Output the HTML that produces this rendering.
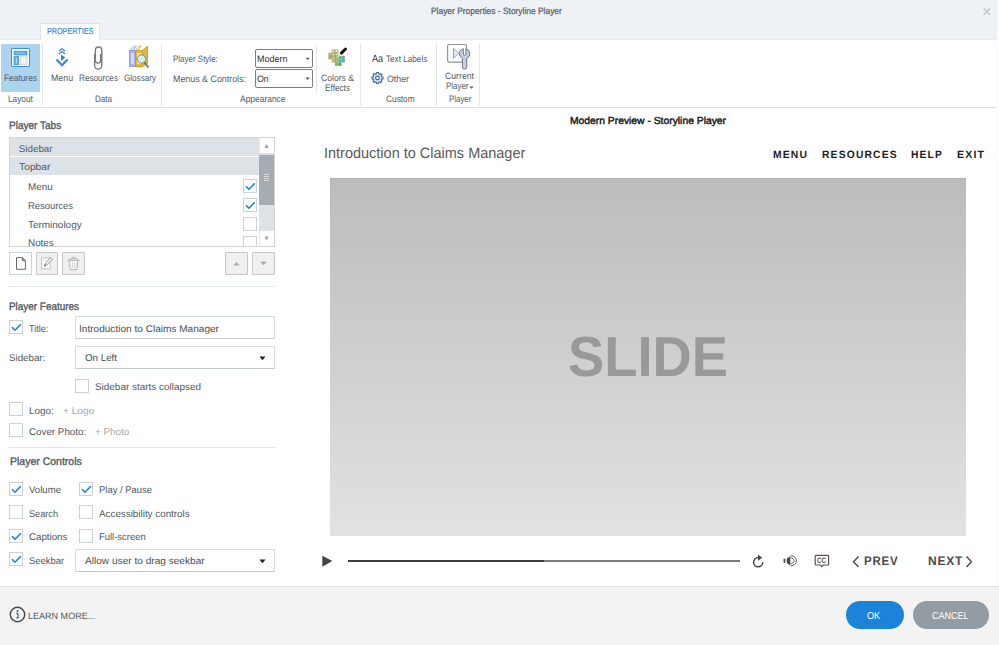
<!DOCTYPE html>
<html><head><meta charset="utf-8"><style>
html,body{margin:0;padding:0;}
body{width:999px;height:645px;position:relative;overflow:hidden;background:#fff;font-family:"Liberation Sans",sans-serif;text-rendering:geometricPrecision;}
.t{position:absolute;white-space:nowrap;line-height:1;}
.b{position:absolute;}
</style></head><body>
<div class="b" style="left:0px;top:0px;width:997px;height:40px;background:#eef2f6"></div>
<div class="b" style="left:0px;top:39px;width:997px;height:1px;background:#e7ebee"></div>
<div class="b" style="left:997px;top:0px;width:2px;height:586px;background:#fdfdfd"></div>
<div class="t" style="left:431.00px;top:6.81px;font-size:9.2px;color:#5a6168;transform:scaleX(0.9150);transform-origin:0 0;-webkit-text-stroke:0.25px #5a6168;">Player Properties - Storyline Player</div>
<svg class="b" style="left:981px;top:6px" width="12" height="12" viewBox="0 0 12 12"><path d="M2.6 2.4L9.2 8.8M9.2 2.4L2.6 8.8" stroke="#c4c6c8" stroke-width="1.6"/></svg>
<div class="b" style="left:40px;top:23px;width:60px;height:17px;background:#fff;border:1px solid #dfe4e8;border-bottom:none;box-sizing:border-box"></div>
<div class="t" style="left:46.80px;top:26.75px;font-size:8.8px;color:#2f86d8;transform:scaleX(0.8186);transform-origin:0 0;-webkit-text-stroke:0.15px #2f86d8;">PROPERTIES</div>
<div class="b" style="left:0px;top:40px;width:997px;height:67px;background:#fff"></div>
<div class="b" style="left:0px;top:107px;width:997px;height:1px;background:#dde3e8"></div>
<div class="b" style="left:1px;top:44px;width:39px;height:48px;background:#add4ef"></div>
<div class="b" style="left:42px;top:43px;width:1px;height:63px;background:#e3e8ec"></div>
<div class="b" style="left:161px;top:43px;width:1px;height:63px;background:#e3e8ec"></div>
<div class="b" style="left:360px;top:43px;width:1px;height:63px;background:#e3e8ec"></div>
<div class="b" style="left:436px;top:43px;width:1px;height:63px;background:#e3e8ec"></div>
<div class="b" style="left:479px;top:43px;width:1px;height:63px;background:#e3e8ec"></div>
<div class="b" style="left:316px;top:45px;width:1px;height:47px;background:#e2e3e5"></div>
<div class="t" style="left:3.80px;top:73.93px;font-size:9.3px;color:#525c66;transform:scaleX(0.8989);transform-origin:0 0;">Features</div>
<div class="t" style="left:8.00px;top:95.13px;font-size:9.3px;color:#525c66;transform:scaleX(0.8881);transform-origin:0 0;">Layout</div>
<div class="t" style="left:51.20px;top:73.93px;font-size:9.3px;color:#525c66;transform:scaleX(0.9496);transform-origin:0 0;">Menu</div>
<div class="t" style="left:79.00px;top:73.93px;font-size:9.3px;color:#525c66;transform:scaleX(0.8773);transform-origin:0 0;">Resources</div>
<div class="t" style="left:124.00px;top:73.93px;font-size:9.3px;color:#525c66;transform:scaleX(0.8722);transform-origin:0 0;">Glossary</div>
<div class="t" style="left:95.30px;top:94.93px;font-size:9.3px;color:#525c66;transform:scaleX(0.8653);transform-origin:0 0;">Data</div>
<div class="t" style="left:173.00px;top:55.23px;font-size:9.3px;color:#525c66;transform:scaleX(0.8583);transform-origin:0 0;">Player Style:</div>
<div class="t" style="left:173.00px;top:74.93px;font-size:9.3px;color:#525c66;transform:scaleX(0.9543);transform-origin:0 0;">Menus &amp; Controls:</div>
<div class="b" style="left:255px;top:49px;width:58px;height:19px;background:#fff;border:1.2px solid #7d7d7d;box-sizing:border-box;border-radius:2px"></div>
<div class="b" style="left:255px;top:69px;width:58px;height:19px;background:#fff;border:1.2px solid #7d7d7d;box-sizing:border-box;border-radius:2px"></div>
<div class="t" style="left:257.30px;top:55.23px;font-size:9.3px;color:#333;transform:scaleX(0.9674);transform-origin:0 0;">Modern</div>
<div class="t" style="left:257.30px;top:74.93px;font-size:9.3px;color:#333;transform:scaleX(0.9424);transform-origin:0 0;">On</div>
<svg class="b" style="left:305px;top:57px" width="6" height="4" viewBox="0 0 6 4"><path d="M0.6 0.8h4l-2 2.3z" fill="#505050"/></svg>
<svg class="b" style="left:305px;top:77px" width="6" height="4" viewBox="0 0 6 4"><path d="M0.6 0.6h4l-2 2.3z" fill="#505050"/></svg>
<div class="t" style="left:321.40px;top:73.93px;font-size:9.3px;color:#525c66;transform:scaleX(0.9253);transform-origin:0 0;">Colors &amp;</div>
<div class="t" style="left:325.00px;top:83.73px;font-size:9.3px;color:#525c66;transform:scaleX(0.8850);transform-origin:0 0;">Effects</div>
<div class="t" style="left:240.00px;top:94.93px;font-size:9.3px;color:#525c66;transform:scaleX(0.9073);transform-origin:0 0;">Appearance</div>
<div class="t" style="left:371.80px;top:53.91px;font-size:10.5px;color:#3a3a3a;transform:scaleX(0.8707);transform-origin:0 0;">Aa</div>
<div class="t" style="left:386.30px;top:55.33px;font-size:9.3px;color:#525c66;transform:scaleX(0.8776);transform-origin:0 0;">Text Labels</div>
<div class="t" style="left:386.70px;top:74.83px;font-size:9.3px;color:#525c66;transform:scaleX(0.9462);transform-origin:0 0;">Other</div>
<div class="t" style="left:385.80px;top:95.13px;font-size:9.3px;color:#525c66;transform:scaleX(0.8958);transform-origin:0 0;">Custom</div>
<div class="t" style="left:444.70px;top:71.93px;font-size:9.3px;color:#525c66;transform:scaleX(0.9350);transform-origin:0 0;">Current</div>
<div class="t" style="left:445.70px;top:82.33px;font-size:9.3px;color:#525c66;transform:scaleX(0.8534);transform-origin:0 0;">Player</div>
<svg class="b" style="left:469px;top:86px" width="5" height="4" viewBox="0 0 5 4"><path d="M0.5 0.6h4l-2 2.2z" fill="#555"/></svg>
<div class="t" style="left:448.60px;top:95.13px;font-size:9.3px;color:#525c66;transform:scaleX(0.8496);transform-origin:0 0;">Player</div>
<svg class="b" style="left:10px;top:47px" width="22" height="21" viewBox="0 0 22 21">
<rect x="1.5" y="1.5" width="18" height="18" rx="1.5" fill="#fff" stroke="#3b92d4" stroke-width="1.1"/>
<rect x="4" y="4.2" width="13" height="3.8" fill="#5aaae8" stroke="#3b8fd2" stroke-width="0.7"/>
<path d="M6 6.1h9" stroke="#a8d4f6" stroke-width="0.9"/>
<rect x="4" y="9.4" width="4.8" height="8.4" fill="#62afea" stroke="#3b8fd2" stroke-width="0.7"/>
<path d="M6.4 10.8v5.6" stroke="#c4e2fa" stroke-width="0.9"/>
<rect x="10.2" y="9.4" width="6.8" height="8.4" fill="#ececec" stroke="#cfcfcf" stroke-width="0.7"/>
<path d="M12.4 10.8v5.6M14.8 10.8v5.6" stroke="#fafafa" stroke-width="0.8"/>
</svg>
<svg class="b" style="left:54px;top:46px" width="16" height="22" viewBox="0 0 16 22">
<path d="M5 5.2L8 2.6L11 5.2M5 8L8 5.4L11 8" fill="none" stroke="#4a8fd6" stroke-width="1.3"/>
<path d="M7 8.5L11.3 11.5L7 15z" fill="#3f7fc8"/>
<path d="M2.5 13.5L8 19.2L13.5 13.5" fill="none" stroke="#3a86d3" stroke-width="2.2"/>
</svg>
<svg class="b" style="left:92px;top:45px" width="13" height="26" viewBox="0 0 13 26">
<path d="M2.6 9V20.5A3.6 3.6 0 0 0 9.8 20.5V5.2A3.2 3.2 0 0 0 3.4 5.2V15.5A2.6 2.6 0 0 0 8.6 15.5V9" fill="none" stroke="#7b7b7b" stroke-width="1.4"/>
</svg>
<svg class="b" style="left:127px;top:44px" width="24" height="26" viewBox="0 0 24 26">
<path d="M2.5 6.5L6.5 2H9.5L6.5 6.5z" fill="#d8dcf4" stroke="#9aa0e0" stroke-width="0.6"/>
<rect x="2.5" y="6.5" width="6" height="16" fill="#a9b0f0" stroke="#8088d8" stroke-width="0.7"/>
<rect x="4" y="9" width="3" height="11" fill="#d4d8fa"/>
<path d="M8.5 6.5L12 2H14.5L11 6.5z" fill="#f4e8b8" stroke="#c8a838" stroke-width="0.6"/>
<path d="M8.5 6.5H15L20.5 2.2V19.5L15 23H8.5z" fill="#e0b838" stroke="#b89020" stroke-width="0.7"/>
<rect x="10" y="9" width="4" height="11" fill="#f4e4a0"/>
<line x1="17" y1="18" x2="21.5" y2="23.5" stroke="#6a6a6a" stroke-width="1.8"/>
<circle cx="14.5" cy="15" r="4.2" fill="#d8eef4" stroke="#7a8a90" stroke-width="1"/>
</svg>
<svg class="b" style="left:328px;top:49px" width="18" height="17" viewBox="0 0 18 17"><rect x="3.75" y="0.50" width="3.3" height="3.3" fill="#8a9aaa"/><circle cx="5.40" cy="2.15" r="1.2" fill="#f8e070"/><rect x="7.00" y="0.50" width="3.3" height="3.3" fill="#8a9aaa"/><circle cx="8.65" cy="2.15" r="1.2" fill="#f2f08a"/><rect x="0.50" y="3.75" width="3.3" height="3.3" fill="#8a9aaa"/><circle cx="2.15" cy="5.40" r="1.2" fill="#f6b030"/><rect x="3.75" y="3.75" width="3.3" height="3.3" fill="#8a9aaa"/><circle cx="5.40" cy="5.40" r="1.2" fill="#f4e64c"/><rect x="7.00" y="3.75" width="3.3" height="3.3" fill="#8a9aaa"/><circle cx="8.65" cy="5.40" r="1.2" fill="#d8f060"/><rect x="0.50" y="7.00" width="3.3" height="3.3" fill="#8a9aaa"/><circle cx="2.15" cy="8.65" r="1.2" fill="#f0a020"/><rect x="3.75" y="7.00" width="3.3" height="3.3" fill="#8a9aaa"/><circle cx="5.40" cy="8.65" r="1.2" fill="#f0e020"/><rect x="7.00" y="7.00" width="3.3" height="3.3" fill="#8a9aaa"/><circle cx="8.65" cy="8.65" r="1.2" fill="#a8e040"/><rect x="10.25" y="7.00" width="3.3" height="3.3" fill="#8a9aaa"/><circle cx="11.90" cy="8.65" r="1.2" fill="#40d860"/><rect x="13.50" y="7.00" width="3.3" height="3.3" fill="#8a9aaa"/><circle cx="15.15" cy="8.65" r="1.2" fill="#40c8a8"/><rect x="3.75" y="10.25" width="3.3" height="3.3" fill="#8a9aaa"/><circle cx="5.40" cy="11.90" r="1.2" fill="#f0d820"/><rect x="7.00" y="10.25" width="3.3" height="3.3" fill="#8a9aaa"/><circle cx="8.65" cy="11.90" r="1.2" fill="#a0d838"/><rect x="10.25" y="10.25" width="3.3" height="3.3" fill="#8a9aaa"/><circle cx="11.90" cy="11.90" r="1.2" fill="#38c858"/><rect x="13.50" y="10.25" width="3.3" height="3.3" fill="#8a9aaa"/><circle cx="15.15" cy="11.90" r="1.2" fill="#30c0b0"/><rect x="7.00" y="13.50" width="3.3" height="3.3" fill="#8a9aaa"/><circle cx="8.65" cy="15.15" r="1.2" fill="#88c830"/><rect x="10.25" y="13.50" width="3.3" height="3.3" fill="#8a9aaa"/><circle cx="11.90" cy="15.15" r="1.2" fill="#30b850"/></svg>
<svg class="b" style="left:336px;top:47px" width="11" height="12" viewBox="0 0 11 12"><path d="M1.5 10L6 5.5" stroke="#e8e0c0" stroke-width="1.6"/><path d="M5.5 6L9.5 2" stroke="#111" stroke-width="3" stroke-linecap="round"/></svg>
<svg class="b" style="left:370px;top:71px" width="15" height="15" viewBox="0 0 15 15"><path d="M11.64 5.85L13.02 6.04L13.02 7.96L11.64 8.15L11.24 9.12L12.08 10.22L10.72 11.58L9.62 10.74L8.65 11.14L8.46 12.52L6.54 12.52L6.35 11.14L5.38 10.74L4.28 11.58L2.92 10.22L3.76 9.12L3.36 8.15L1.98 7.96L1.98 6.04L3.36 5.85L3.76 4.88L2.92 3.78L4.28 2.42L5.38 3.26L6.35 2.86L6.54 1.48L8.46 1.48L8.65 2.86L9.62 3.26L10.72 2.42L12.08 3.78L11.24 4.88z" fill="#dfe8f2" stroke="#3a6598" stroke-width="1.1" stroke-linejoin="round"/><circle cx="7.5" cy="7" r="1.9" fill="#fff" stroke="#3a6598" stroke-width="1.1"/></svg>
<svg class="b" style="left:446px;top:43px" width="26" height="27" viewBox="0 0 26 27">
<rect x="1.6" y="1.5" width="18.8" height="17.6" rx="1.5" fill="#fff" stroke="#8c969c" stroke-width="1.2"/>
<path d="M7.5 5.3L12.8 10.3L7.5 15.3z" fill="#dceafa" stroke="#7aa0d0" stroke-width="0.9"/>
<path d="M17.3 5.67V11A1.3 1.3 0 0 0 19.9 11V5.67A5.2 5.2 0 0 1 20.8 15.41V24A2.2 2.2 0 0 1 16.4 24V15.41A5.2 5.2 0 0 1 17.3 5.67z" fill="#c9cde2" stroke="#6e7a84" stroke-width="1"/>
</svg>
<div class="t" style="left:9.30px;top:121.49px;font-size:11px;color:#4f5963;transform:scaleX(0.9113);transform-origin:0 0;-webkit-text-stroke:0.35px #4f5963;">Player Tabs</div>
<div class="b" style="left:9px;top:137px;width:266px;height:110px;border:1px solid #d2d6da;box-sizing:border-box;background:#fff;border-bottom-width:1.5px"></div>
<div class="b" style="left:10px;top:138px;width:249px;height:18px;background:#dde2e6"></div>
<div class="b" style="left:10px;top:157px;width:249px;height:18px;background:#dde2e6"></div>
<div class="t" style="left:18.80px;top:144.60px;font-size:9.8px;color:#4f5963;">Sidebar</div>
<div class="t" style="left:18.80px;top:162.70px;font-size:9.8px;color:#4f5963;transform:scaleX(1.0513);transform-origin:0 0;">Topbar</div>
<div class="t" style="left:27.80px;top:183.10px;font-size:9.8px;color:#4f5963;transform:scaleX(1.0072);transform-origin:0 0;">Menu</div>
<div class="t" style="left:27.80px;top:202.10px;font-size:9.8px;color:#4f5963;transform:scaleX(0.9606);transform-origin:0 0;">Resources</div>
<div class="t" style="left:27.80px;top:220.80px;font-size:9.8px;color:#4f5963;transform:scaleX(1.0162);transform-origin:0 0;">Terminology</div>
<div class="b" style="left:10px;top:232px;width:249px;height:14px;overflow:hidden">
<div class="t" style="left:17.80px;top:7.40px;font-size:9.8px;color:#4f5963;transform:scaleX(1.0077);transform-origin:0 0;">Notes</div>
</div>
<div class="b" style="left:243px;top:179px;width:14px;height:14px;border:1px solid #cad1d7;box-sizing:border-box;background:#fff"></div>
<svg class="b" style="left:243px;top:179px" width="14" height="14" viewBox="0 0 14 14"><path d="M3 7.2L6 10.2L11.8 4.2" fill="none" stroke="#1a7fd6" stroke-width="1.6"/></svg>
<div class="b" style="left:243px;top:198px;width:14px;height:14px;border:1px solid #cad1d7;box-sizing:border-box;background:#fff"></div>
<svg class="b" style="left:243px;top:198px" width="14" height="14" viewBox="0 0 14 14"><path d="M3 7.2L6 10.2L11.8 4.2" fill="none" stroke="#1a7fd6" stroke-width="1.6"/></svg>
<div class="b" style="left:243px;top:217px;width:14px;height:14px;border:1px solid #cad1d7;box-sizing:border-box;background:#fff"></div>
<div class="b" style="left:243px;top:236px;width:14px;height:10px;border:1px solid #cad1d7;box-sizing:border-box;background:#fff;border-bottom:none"></div>
<div class="b" style="left:259px;top:138px;width:15px;height:108px;background:#fff;border-left:1px solid #e6e9ec;box-sizing:border-box"></div>
<div class="b" style="left:259px;top:153px;width:15px;height:78px;background:#dde2e6"></div>
<div class="b" style="left:259px;top:155px;width:15px;height:50px;background:#a3acb2"></div>
<svg class="b" style="left:259px;top:138px" width="15" height="15" viewBox="0 0 15 15"><path d="M5.5 10h4.2L7.6 6z" fill="#9aa3aa"/></svg>
<svg class="b" style="left:259px;top:231px" width="15" height="15" viewBox="0 0 15 15"><path d="M5.5 5.5h4.2L7.6 9.5z" fill="#9aa3aa"/></svg>
<svg class="b" style="left:259px;top:172px" width="15" height="12" viewBox="0 0 15 12"><path d="M5 2.5h5M5 4.5h5M5 6.5h5M5 8.5h5" stroke="#d4d9dd" stroke-width="1"/></svg>
<div class="b" style="left:9px;top:252px;width:23px;height:23px;border:1px solid #c9d5df;box-sizing:border-box;background:#fff"></div>
<svg class="b" style="left:9px;top:252px" width="23" height="23" viewBox="0 0 23 23"><path d="M7.5 5.6H13.2L16.4 8.8V17.3H7.5z" fill="#fff" stroke="#626c72" stroke-width="1"/><path d="M13.2 5.6V8.8H16.4z" fill="#8a9298" stroke="#626c72" stroke-width="0.7"/></svg>
<div class="b" style="left:36px;top:252px;width:22px;height:23px;border:1.3px solid #c6c6c6;box-sizing:border-box;background:#f0f0f0;border-radius:1px"></div>
<svg class="b" style="left:36px;top:252px" width="23" height="23" viewBox="0 0 23 23"><rect x="5.6" y="5.8" width="8.6" height="11" fill="#fbfbfb" stroke="#bdbdbd" stroke-width="0.9"/><path d="M7.4 8.2h2" stroke="#d0d0d0" stroke-width="0.8"/><path d="M14.6 5.2L16.6 7.2L10.4 13.4L8.2 14.2L9 12z" fill="#f4f4f4" stroke="#8f8f8f" stroke-width="0.9" stroke-linejoin="round"/><path d="M8.3 14.1L9 12.1L10.3 13.4z" fill="#666"/></svg>
<div class="b" style="left:62px;top:252px;width:23px;height:23px;border:1.3px solid #c6c6c6;box-sizing:border-box;background:#f0f0f0;border-radius:1px"></div>
<svg class="b" style="left:62px;top:252px" width="23" height="23" viewBox="0 0 23 23"><path d="M6 8.6Q6 6.6 11.5 6.4Q17 6.6 17 8.6z" fill="#e4e4e4" stroke="#b4b4b4" stroke-width="1"/><path d="M9.8 6.4Q9.8 5 11.5 5Q13.2 5 13.2 6.4" fill="none" stroke="#b4b4b4" stroke-width="0.9"/><path d="M7.2 9.2L8.3 17.2Q11.5 18.2 14.7 17.2L15.8 9.2" fill="#fafafa" stroke="#b4b4b4" stroke-width="1.1"/><path d="M10.4 10.4v5.6M12.6 10.4v5.6" stroke="#cdcdcd" stroke-width="0.9"/></svg>
<div class="b" style="left:225px;top:252px;width:23px;height:23px;border:1.3px solid #c6c6c6;box-sizing:border-box;background:#f0f0f0;border-radius:1px"></div>
<svg class="b" style="left:225px;top:252px" width="23" height="23" viewBox="0 0 23 23"><path d="M8.3 13.5h6.4L11.5 10z" fill="#a9a9a9"/></svg>
<div class="b" style="left:252px;top:252px;width:23px;height:23px;border:1.3px solid #c6c6c6;box-sizing:border-box;background:#f0f0f0;border-radius:1px"></div>
<svg class="b" style="left:252px;top:252px" width="23" height="23" viewBox="0 0 23 23"><path d="M8.3 9.8h6.4L11.5 13.3z" fill="#a9a9a9"/></svg>
<div class="b" style="left:9px;top:286px;width:266px;height:1px;background:#e2e7eb"></div>
<div class="t" style="left:9.30px;top:302.49px;font-size:11px;color:#4f5963;transform:scaleX(0.9014);transform-origin:0 0;-webkit-text-stroke:0.35px #4f5963;">Player Features</div>
<div class="b" style="left:9px;top:320px;width:14px;height:14px;border:1px solid #cad1d7;box-sizing:border-box;background:#fff"></div>
<svg class="b" style="left:9px;top:320px" width="14" height="14" viewBox="0 0 14 14"><path d="M3 7.2L6 10.2L11.8 4.2" fill="none" stroke="#1a7fd6" stroke-width="1.6"/></svg>
<div class="t" style="left:29.30px;top:324.90px;font-size:9.8px;color:#4f5963;transform:scaleX(0.9246);transform-origin:0 0;">Title:</div>
<div class="b" style="left:75px;top:316px;width:200px;height:23px;border:1px solid #d5dde3;border-bottom-color:#c4cdd5;box-sizing:border-box;background:#fff;border-radius:1px"></div>
<div class="t" style="left:79.20px;top:324.80px;font-size:9.8px;color:#4a4f55;transform:scaleX(1.0281);transform-origin:0 0;">Introduction to Claims Manager</div>
<div class="t" style="left:8.70px;top:353.90px;font-size:9.8px;color:#4f5963;transform:scaleX(0.9944);transform-origin:0 0;">Sidebar:</div>
<div class="b" style="left:75px;top:346px;width:200px;height:23px;border:1px solid #d5dde3;border-bottom-color:#c4cdd5;box-sizing:border-box;background:#fff;border-radius:1px"></div>
<div class="t" style="left:85.30px;top:353.90px;font-size:9.8px;color:#4a4f55;transform:scaleX(0.9955);transform-origin:0 0;">On Left</div>
<svg class="b" style="left:258px;top:355px" width="8" height="6" viewBox="0 0 8 6"><path d="M1.5 1.5h6L4.5 5.3z" fill="#222"/></svg>
<div class="b" style="left:75px;top:379px;width:14px;height:14px;border:1px solid #cad1d7;box-sizing:border-box;background:#fff"></div>
<div class="t" style="left:95.20px;top:383.20px;font-size:9.8px;color:#4f5963;transform:scaleX(1.0135);transform-origin:0 0;">Sidebar starts collapsed</div>
<div class="b" style="left:9px;top:402px;width:14px;height:14px;border:1px solid #cad1d7;box-sizing:border-box;background:#fff"></div>
<div class="t" style="left:29.00px;top:406.90px;font-size:9.8px;color:#4f5963;transform:scaleX(1.0072);transform-origin:0 0;">Logo:</div>
<div class="t" style="left:62.60px;top:406.90px;font-size:9.8px;color:#a7a9ab;transform:scaleX(1.0345);transform-origin:0 0;">+ Logo</div>
<div class="b" style="left:9px;top:423px;width:14px;height:14px;border:1px solid #cad1d7;box-sizing:border-box;background:#fff"></div>
<div class="t" style="left:29.00px;top:427.70px;font-size:9.8px;color:#4f5963;">Cover Photo:</div>
<div class="t" style="left:95.00px;top:427.70px;font-size:9.8px;color:#a7a9ab;transform:scaleX(1.0043);transform-origin:0 0;">+ Photo</div>
<div class="b" style="left:9px;top:447px;width:266px;height:1px;background:#e2e7eb"></div>
<div class="t" style="left:9.60px;top:457.09px;font-size:11px;color:#4f5963;transform:scaleX(0.9536);transform-origin:0 0;-webkit-text-stroke:0.35px #4f5963;">Player Controls</div>
<div class="b" style="left:9px;top:482px;width:14px;height:14px;border:1px solid #cad1d7;box-sizing:border-box;background:#fff"></div>
<svg class="b" style="left:9px;top:482px" width="14" height="14" viewBox="0 0 14 14"><path d="M3 7.2L6 10.2L11.8 4.2" fill="none" stroke="#1a7fd6" stroke-width="1.6"/></svg>
<div class="t" style="left:29.00px;top:486.10px;font-size:9.8px;color:#4f5963;transform:scaleX(0.9791);transform-origin:0 0;">Volume</div>
<div class="b" style="left:79px;top:482px;width:14px;height:14px;border:1px solid #cad1d7;box-sizing:border-box;background:#fff"></div>
<svg class="b" style="left:79px;top:482px" width="14" height="14" viewBox="0 0 14 14"><path d="M3 7.2L6 10.2L11.8 4.2" fill="none" stroke="#1a7fd6" stroke-width="1.6"/></svg>
<div class="t" style="left:98.50px;top:486.10px;font-size:9.8px;color:#4f5963;transform:scaleX(0.9632);transform-origin:0 0;">Play / Pause</div>
<div class="b" style="left:9px;top:505px;width:14px;height:14px;border:1px solid #cad1d7;box-sizing:border-box;background:#fff"></div>
<div class="t" style="left:29.00px;top:509.50px;font-size:9.8px;color:#4f5963;transform:scaleX(0.9342);transform-origin:0 0;">Search</div>
<div class="b" style="left:79px;top:505px;width:14px;height:14px;border:1px solid #cad1d7;box-sizing:border-box;background:#fff"></div>
<div class="t" style="left:98.50px;top:509.50px;font-size:9.8px;color:#4f5963;transform:scaleX(1.0033);transform-origin:0 0;">Accessibility controls</div>
<div class="b" style="left:9px;top:529px;width:14px;height:14px;border:1px solid #cad1d7;box-sizing:border-box;background:#fff"></div>
<svg class="b" style="left:9px;top:529px" width="14" height="14" viewBox="0 0 14 14"><path d="M3 7.2L6 10.2L11.8 4.2" fill="none" stroke="#1a7fd6" stroke-width="1.6"/></svg>
<div class="t" style="left:29.00px;top:533.10px;font-size:9.8px;color:#4f5963;transform:scaleX(0.9900);transform-origin:0 0;">Captions</div>
<div class="b" style="left:79px;top:529px;width:14px;height:14px;border:1px solid #cad1d7;box-sizing:border-box;background:#fff"></div>
<div class="t" style="left:98.50px;top:533.10px;font-size:9.8px;color:#4f5963;transform:scaleX(0.9637);transform-origin:0 0;">Full-screen</div>
<div class="b" style="left:9px;top:552px;width:14px;height:14px;border:1px solid #cad1d7;box-sizing:border-box;background:#fff"></div>
<svg class="b" style="left:9px;top:552px" width="14" height="14" viewBox="0 0 14 14"><path d="M3 7.2L6 10.2L11.8 4.2" fill="none" stroke="#1a7fd6" stroke-width="1.6"/></svg>
<div class="t" style="left:29.00px;top:556.60px;font-size:9.8px;color:#4f5963;transform:scaleX(0.9643);transform-origin:0 0;">Seekbar</div>
<div class="b" style="left:75px;top:549px;width:200px;height:23px;border:1px solid #d5dde3;border-bottom-color:#c4cdd5;box-sizing:border-box;background:#fff;border-radius:1px"></div>
<div class="t" style="left:85.00px;top:556.60px;font-size:9.8px;color:#4a4f55;transform:scaleX(1.0316);transform-origin:0 0;">Allow user to drag seekbar</div>
<svg class="b" style="left:258px;top:558px" width="8" height="6" viewBox="0 0 8 6"><path d="M1.5 1.5h6L4.5 5.3z" fill="#222"/></svg>
<div class="t" style="left:570.30px;top:117.17px;font-size:10.2px;color:#1a1a1a;transform:scaleX(1.0130);transform-origin:0 0;-webkit-text-stroke:0.45px #1a1a1a;">Modern Preview - Storyline Player</div>
<div class="t" style="left:324.40px;top:145.90px;font-size:15px;color:#5a5a5a;transform:scaleX(0.9658);transform-origin:0 0;">Introduction to Claims Manager</div>
<div class="t" style="left:773.00px;top:150.33px;font-size:10.6px;color:#222;font-weight:bold;letter-spacing:1.2px;transform:scaleX(0.9765);transform-origin:0 0;">MENU</div>
<div class="t" style="left:821.70px;top:150.33px;font-size:10.6px;color:#222;font-weight:bold;letter-spacing:1.2px;transform:scaleX(0.9733);transform-origin:0 0;">RESOURCES</div>
<div class="t" style="left:911.00px;top:150.33px;font-size:10.6px;color:#222;font-weight:bold;letter-spacing:1.2px;transform:scaleX(0.9663);transform-origin:0 0;">HELP</div>
<div class="t" style="left:956.70px;top:150.33px;font-size:10.6px;color:#222;font-weight:bold;letter-spacing:1.2px;transform:scaleX(0.9942);transform-origin:0 0;">EXIT</div>
<div class="b" style="left:330px;top:178px;width:636px;height:358px;background:linear-gradient(#bcbcbc,#e2e2e2)"></div>
<div class="b" style="left:330px;top:178px;width:636px;height:1px;background:#b3b3b3"></div>
<div class="t" style="left:567.60px;top:329.17px;font-size:56.5px;color:#999;font-weight:bold;transform:scaleX(0.9610);transform-origin:0 0;">SLIDE</div>
<svg class="b" style="left:320px;top:553px" width="16" height="16" viewBox="0 0 16 16"><path d="M2.3 2.8L12.4 8L2.3 13.8z" fill="#444"/></svg>
<div class="b" style="left:348px;top:560px;width:196px;height:2px;background:#3d3d3d"></div>
<div class="b" style="left:544px;top:560px;width:196px;height:2px;background:#7d7d7d"></div>
<svg class="b" style="left:750px;top:552px" width="16" height="17" viewBox="0 0 16 17"><path d="M12.8 10.2A4.6 4.6 0 1 1 8.2 5.6" fill="none" stroke="#444" stroke-width="1.5"/><path d="M8 2.6L12.2 5.7L8 8.8z" fill="#444"/></svg>
<svg class="b" style="left:781px;top:552px" width="18" height="16" viewBox="0 0 18 16"><rect x="2.6" y="6.8" width="1.7" height="4" fill="#444"/><path d="M5.8 6.6L9.3 4.2V13.4L5.8 11z" fill="#444"/><path d="M9.6 3.6Q15.4 4.6 15.4 8.8Q15.4 13 9.6 14" fill="none" stroke="#555" stroke-width="0.9"/><path d="M9.6 5.6Q13.2 6.4 13.2 8.8Q13.2 11.2 9.6 12" fill="none" stroke="#555" stroke-width="0.9"/></svg>
<svg class="b" style="left:812px;top:552px" width="20" height="17" viewBox="0 0 20 17"><path d="M4 3.4H15.8Q16.6 3.4 16.6 4.2V12.2Q16.6 13 15.8 13H11.2L9.9 14.6L8.6 13H4Q3.2 13 3.2 12.2V4.2Q3.2 3.4 4 3.4z" fill="#fff" stroke="#555" stroke-width="1.2"/></svg>
<div class="t" style="left:817.00px;top:556.70px;font-size:7.8px;color:#555;font-weight:bold;transform:scaleX(0.7985);transform-origin:0 0;">CC</div>
<svg class="b" style="left:850px;top:554px" width="12" height="15" viewBox="0 0 12 15"><path d="M8.5 2.5L3.5 7.8L8.5 13" fill="none" stroke="#4a4a4a" stroke-width="1.4"/></svg>
<div class="t" style="left:863.70px;top:554.50px;font-size:12.4px;color:#4a4a4a;font-weight:bold;letter-spacing:0.8px;transform:scaleX(0.9292);transform-origin:0 0;">PREV</div>
<div class="t" style="left:927.50px;top:554.50px;font-size:12.4px;color:#4a4a4a;font-weight:bold;letter-spacing:0.8px;transform:scaleX(0.9668);transform-origin:0 0;">NEXT</div>
<svg class="b" style="left:963px;top:554px" width="12" height="15" viewBox="0 0 12 15"><path d="M3.5 2.5L8.5 7.8L3.5 13" fill="none" stroke="#4a4a4a" stroke-width="1.4"/></svg>
<div class="b" style="left:0px;top:586px;width:999px;height:1px;background:#dfe3e6"></div>
<div class="b" style="left:0px;top:587px;width:999px;height:58px;background:#f3f3f3"></div>
<svg class="b" style="left:8px;top:605px" width="19" height="19" viewBox="0 0 19 19"><circle cx="9.5" cy="9.5" r="7.2" fill="none" stroke="#3f4d56" stroke-width="1.4"/><circle cx="9.5" cy="6" r="0.9" fill="#3f4d56"/><path d="M8.2 8.3H10V12.6M8.2 12.8H11" fill="none" stroke="#3f4d56" stroke-width="1"/></svg>
<div class="t" style="left:28.20px;top:612.01px;font-size:9.2px;color:#515b64;transform:scaleX(0.9826);transform-origin:0 0;">LEARN MORE...</div>
<div class="b" style="left:846px;top:601px;width:58px;height:28px;background:#1b84d8;border-radius:14px"></div>
<div class="t" style="left:867.40px;top:612.34px;font-size:10px;color:#fff;transform:scaleX(0.9135);transform-origin:0 0;">OK</div>
<div class="b" style="left:913px;top:601px;width:76px;height:28px;background:#939ca3;border-radius:14px"></div>
<div class="t" style="left:931.50px;top:612.34px;font-size:10px;color:#fff;transform:scaleX(0.8971);transform-origin:0 0;">CANCEL</div>
</body></html>
